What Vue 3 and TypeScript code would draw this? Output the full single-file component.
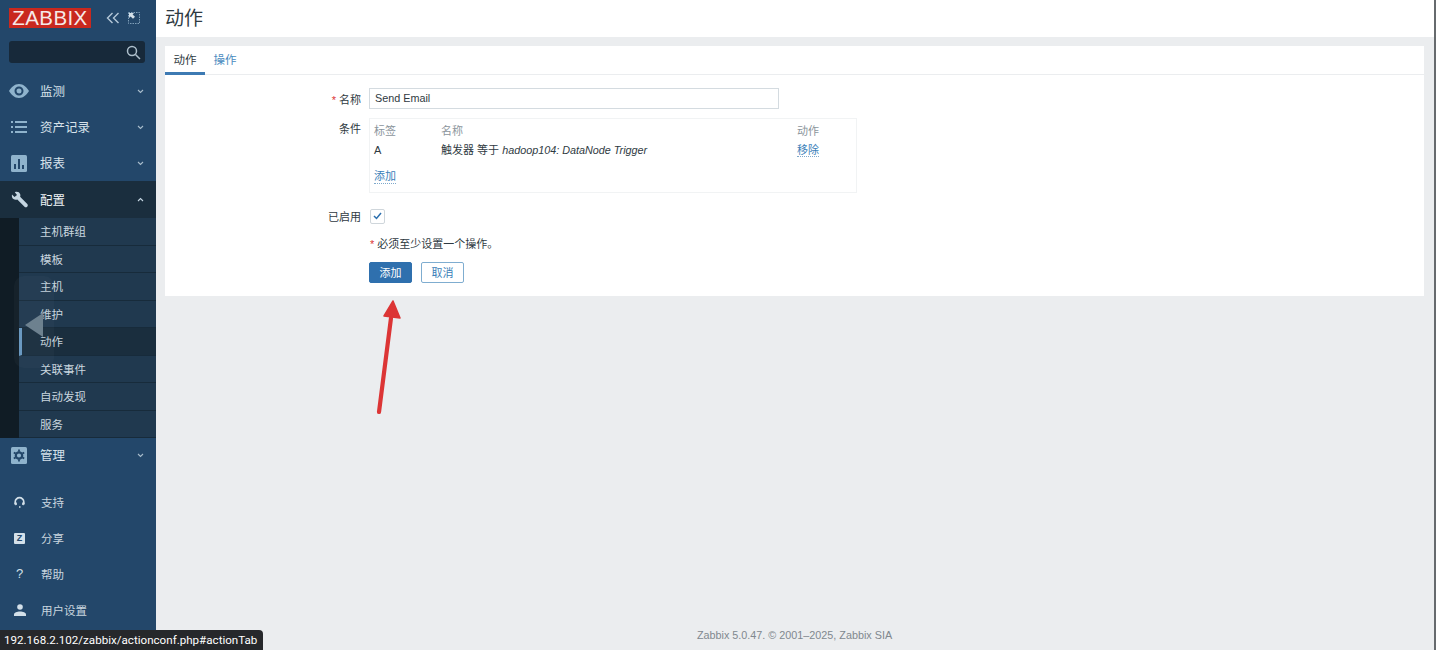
<script setup lang="ts">
const mainTop = [
  { label: '监测', icon: 'eye' },
  { label: '资产记录', icon: 'list' },
  { label: '报表', icon: 'chart' },
]
const subItems = ['主机群组', '模板', '主机', '维护', '动作', '关联事件', '自动发现', '服务']
const lower = [
  { label: '支持', icon: 'head' },
  { label: '分享', icon: 'z' },
  { label: '帮助', icon: 'q' },
  { label: '用户设置', icon: 'user' },
]
</script>

<template>
  <div class="page">
    <aside class="side">
      <div class="brand">
        <span class="logo">ZABBIX</span>
        <svg class="collapse" width="14" height="12" viewBox="0 0 14 12" fill="none" stroke="#b4c8d8" stroke-width="1.4"><path d="M6.5 1 1.5 6l5 5M12.5 1l-5 5 5 5" /></svg>
        <svg class="kiosk" width="12" height="12" viewBox="0 0 12 12" fill="none"><rect x=".5" y=".5" width="11" height="11" stroke="#7f9fb8" stroke-dasharray="1.500 1" /><path d="M1 1h5L4.600 2.400 7 4.800 5 6.800 2.600 4.400 1 6z" fill="#d3e0e9" /></svg>
      </div>
      <div class="search">
        <svg width="15" height="15" viewBox="0 0 15 15" fill="none" stroke="#aebfcc" stroke-width="1.500"><circle cx="6" cy="6" r="4.500" /><path d="m9.500 9.500 4.500 4.500" /></svg>
      </div>
      <nav class="menu">
        <div v-for="m in mainTop" :key="m.label" class="item">
          <span class="ico">
            <svg v-if="m.icon === 'eye'" width="20" height="14" viewBox="0 0 20 14"><path fill="#8fb3cc" fill-rule="evenodd" d="M10 0c4.500 0 8 3.500 10 7-2 3.500-5.500 7-10 7S2 10.500 0 7c2-3.500 5.500-7 10-7Zm0 2.500a4.500 4.500 0 1 0 0 9 4.500 4.500 0 0 0 0-9Zm0 2a2.500 2.500 0 1 1 0 5 2.500 2.500 0 0 1 0-5Z" /></svg>
            <svg v-else-if="m.icon === 'list'" class="pad2" width="16" height="12" viewBox="0 0 16 12" fill="#8fb3cc"><path d="M0 0h2v2H0zM4 0h12v2H4zM0 5h2v2H0zM4 5h12v2H4zM0 10h2v2H0zM4 10h12v2H4z" /></svg>
            <svg v-else class="pad2" width="16" height="17" viewBox="0 0 16 17"><rect width="16" height="17" rx="1.500" fill="#8fb3cc" /><path d="M3 9h2v5H3zM7 4h2v10H7zM11 10h2v4h-2z" fill="#23476a" /></svg>
          </span>
          <span class="lbl">{{ m.label }}</span>
          <svg class="chev" width="7" height="5" viewBox="0 0 7 5" fill="none" stroke="#a8bccb" stroke-width="1.100"><path d="m1 1 2.500 2.500L6 1" /></svg>
        </div>
        <div class="item open">
          <span class="ico">
            <svg class="pad2" width="17" height="17" viewBox="0 0 17 17"><path fill="#c5d6e2" d="M1 3.500 3.500 6 6 4 3.800 1.200C6 .2 8.500 1 9.200 3.200c.3 1 .2 2-.1 2.600l7.200 7.200c.7.800.7 2-.1 2.700-.8.800-2 .8-2.700 0L6.300 8.500C4 9.300 1.600 8.200 1 6 .8 5.200.8 4.300 1 3.500Z" /></svg>
          </span>
          <span class="lbl">配置</span>
          <svg class="chev" width="7" height="5" viewBox="0 0 7 5" fill="none" stroke="#c5d6e2" stroke-width="1.100"><path d="m1 4 2.500-2.500L6 4" /></svg>
        </div>
        <div class="sub">
          <div v-for="s in subItems" :key="s" class="sub-item" :class="{ active: s === '动作' }">{{ s }}</div>
        </div>
        <div class="item mgmt">
          <span class="ico">
            <svg class="pad2" width="16" height="17" viewBox="0 0 16 17"><rect width="16" height="17" rx="1.500" fill="#8fb3cc" /><circle cx="8" cy="8.500" r="3.200" fill="none" stroke="#23476a" stroke-width="2.200" /><path d="M8 2.500v2.200M8 12.300v2.200M2.800 5.500l1.900 1.100M11.300 10.400l1.900 1.100M2.800 11.500l1.900-1.100M11.300 6.600l1.900-1.100" stroke="#23476a" stroke-width="1.800" /></svg>
          </span>
          <span class="lbl">管理</span>
          <svg class="chev" width="7" height="5" viewBox="0 0 7 5" fill="none" stroke="#a8bccb" stroke-width="1.100"><path d="m1 1 2.500 2.500L6 1" /></svg>
        </div>
      </nav>
      <div class="lower">
        <div v-for="l in lower" :key="l.label" class="low-item">
          <span class="low-ico">
            <svg v-if="l.icon === 'head'" width="11" height="12" viewBox="0 0 11 12" fill="none" stroke="#d3e0e9" stroke-width="1.800"><path d="M2.400 8.800a4.200 4.200 0 1 1 6.200 0" /><path d="M1.500 6.500v2M9.500 6.500v2" stroke-width="2.400" /><path d="M5 11h1.500" stroke-width="1.600" /></svg>
            <span v-else-if="l.icon === 'z'" class="zbox">Z</span>
            <span v-else-if="l.icon === 'q'" class="qmark">?</span>
            <svg v-else width="12" height="12" viewBox="0 0 12 12" fill="#d3e0e9"><circle cx="6" cy="3" r="2.800" /><path d="M0 12v-1.500C0 8.500 3 7.500 6 7.500s6 1 6 3V12z" /></svg>
          </span>
          <span class="low-lbl">{{ l.label }}</span>
        </div>
      </div>
    </aside>

    <main class="main">
      <header class="head"><h1>动作</h1></header>
      <section class="card">
        <div class="tabs">
          <span class="tab on">动作</span>
          <span class="tab">操作</span>
        </div>
        <div class="form">
          <div class="row first">
            <label class="lab"><i>*</i> 名称</label>
            <div class="input">Send Email</div>
          </div>
          <div class="row cond">
            <label class="lab">条件</label>
            <div class="cond-box">
              <div class="cgrid hd"><span>标签</span><span>名称</span><span>动作</span></div>
              <div class="cgrid bd">
                <span>A</span>
                <span>触发器 等于 <em>hadoop104: DataNode Trigger</em></span>
                <span><a class="lnk">移除</a></span>
              </div>
              <a class="lnk add">添加</a>
            </div>
          </div>
          <div class="row en">
            <label class="lab">已启用</label>
            <span class="check"><svg width="9" height="8" viewBox="0 0 9 8" fill="none" stroke="#2b6fae" stroke-width="1.500"><path d="m1 4 2.500 2.500L8 1" /></svg></span>
          </div>
          <div class="row note"><span class="lab" /><span class="msg"><i>*</i> 必须至少设置一个操作。</span></div>
          <div class="row btns">
            <span class="lab" />
            <button class="btn pri">添加</button>
            <button class="btn alt">取消</button>
          </div>
        </div>
      </section>
      <footer class="foot">Zabbix 5.0.47. © 2001–2025, Zabbix SIA</footer>
    </main>

    <div class="edge" />
    <div class="swipe"><span class="tri" /></div>
    <svg class="arrow" width="40" height="130" viewBox="0 0 40 130">
      <path d="M9 120 21 26" stroke="#dc3535" stroke-width="4.200" stroke-linecap="round" fill="none" />
      <path d="M23 9 30 26 14 24Z" fill="#dc3535" stroke="#dc3535" stroke-width="1.500" stroke-linejoin="round" />
    </svg>
    <div class="status">192.168.2.102/zabbix/actionconf.php#actionTab</div>
  </div>
</template>

<style>
html, body { margin: 0; background: #ebedef; }
</style>

<style scoped>
.page {
  position: relative;
  display: flex;
  width: 1436px;
  height: 650px;
  overflow: hidden;
  font-family: "Liberation Sans", "Noto Sans CJK SC", sans-serif;
  font-size: 11px;
  color: #2f3a42;
  background: #ebedef;
}
.side {
  width: 156px;
  flex: none;
  display: flex;
  flex-direction: column;
  background: #23476a;
  color: #d3e0e9;
  font-family: "Noto Sans CJK SC", sans-serif;
}
.brand { display: flex; align-items: center; padding: 8px 0 0 9px; height: 20px; }
.logo {
  width: 82px;
  height: 20px;
  background: #c9281e;
  color: #f6e9e8;
  text-align: center;
  font: 20.500px/20px "Liberation Sans", sans-serif;
  letter-spacing: .4px;
}
.collapse { margin-left: 15px; }
.kiosk { margin-left: 8px; }
.search {
  margin: 13px 0 0 9px;
  width: 136px;
  height: 22px;
  border-radius: 3px;
  background: #17293a;
  display: flex;
  align-items: center;
  justify-content: flex-end;
  padding-right: 4px;
  box-sizing: border-box;
}
.menu { margin-top: 10px; }
.item { height: 36px; display: flex; align-items: center; padding-left: 9px; position: relative; font-size: 12.500px; color: #d7e2ea; }
.item.open { height: 37px; background: #1a2e3e; color: #eef3f6; }
.item.mgmt { height: 34px; }
.ico { width: 31px; display: flex; align-items: center; box-sizing: border-box; }
.pad2 { margin-left: 2px; }
.lbl { flex: 1; margin-top: -1px; }
.chev { margin-right: 12px; }
.sub { background: #101c25; padding-left: 19px; }
.sub-item {
  height: 27.500px;
  line-height: 26.500px;
  padding-left: 21px;
  box-sizing: border-box;
  background: #20394f;
  border-bottom: 1px solid #172b3b;
  font-size: 11.500px;
  color: #c9d6df;
}
.sub-item.active { background: #1a2e3e; border-left: 3px solid #6a9bc4; padding-left: 18px; }
.lower { margin-top: 12px; }
.low-item { height: 36px; display: flex; align-items: center; padding-left: 14px; font-size: 11.500px; color: #c9d6df; }
.low-ico { width: 27px; display: flex; align-items: center; }
.low-lbl { margin-top: -1px; }
.zbox { width: 11px; height: 11px; background: #d3e0e9; color: #23476a; font: bold 9px/11px "Liberation Sans", sans-serif; text-align: center; border-radius: 1px; }
.qmark { font: 13px/14px "Liberation Sans", sans-serif; padding-left: 2px; color: #d3e0e9; }

.main { flex: 1; display: flex; flex-direction: column; min-width: 0; }
.head { height: 37px; background: #fff; padding-left: 9px; flex: none; }
h1 { margin: 0; font: 400 19px/33px "Noto Sans CJK SC", sans-serif; color: #2f3a42; }
.card { margin: 9px 12px 0 9px; height: 250px; background: #fff; flex: none; }
.tabs { height: 28px; display: flex; border-bottom: 1px solid #ebedef; }
.tab { width: 40px; text-align: center; line-height: 27px; height: 26px; color: #4a8bc0; font-size: 11.500px; font-family: "Noto Sans CJK SC", sans-serif; }
.tab.on { color: #2f3a42; border-bottom: 3px solid #3d7ab3; }
.form { font-size: 11px; }
.row { display: flex; align-items: center; }
.lab { width: 204px; padding-right: 8px; box-sizing: border-box; text-align: right; flex: none; }
.lab i, .msg i { color: #dc3535; font-style: normal; }
.first { margin-top: 13px; height: 21px; }
.input {
  width: 410px; height: 21px; box-sizing: border-box;
  border: 1px solid #d4dbe0; background: #fff; padding-left: 5px; line-height: 19px;
  font-family: "Liberation Sans", sans-serif; font-size: 10.800px; color: #2f3a42;
}
.cond { margin-top: 9px; align-items: flex-start; }
.cond .lab { line-height: 23px; }
.cond-box { width: 488px; height: 75px; box-sizing: border-box; border: 1px solid #f1f3f4; padding: 0 4px; position: relative; }
.cgrid { display: grid; grid-template-columns: 67px 356px 1fr; }
.hd { color: #8b959c; height: 23px; line-height: 24px; }
.bd { height: 20px; line-height: 16px; }
.bd em { font-family: "Liberation Sans", sans-serif; font-style: italic; font-size: 10.800px; }
.lnk { color: #3a80b8; border-bottom: 1px dotted #7fa9cb; }
.add { display: inline-block; margin-top: 7px; line-height: 14px; }
.en { margin-top: 13px; height: 20px; }
.check { width: 13px; height: 13px; border: 1px solid #cfd6db; border-radius: 2px; display: flex; align-items: center; justify-content: center; margin-left: 1px; }
.note { margin-top: 8px; height: 18px; }
.msg { margin-left: 1px; }
.btns { margin-top: 10px; }
.btn { height: 21px; padding: 0 0 2px; border-radius: 2px; font-family: "Noto Sans CJK SC", sans-serif; font-size: 11px; box-sizing: border-box; }
.pri { width: 43px; background: #2f70ae; border: 1px solid #2f70ae; color: #fff; }
.alt { width: 43px; margin-left: 9px; background: #fff; border: 1px solid #7fadd0; color: #3a80b8; }
.foot { margin-top: auto; height: 29px; line-height: 29px; padding-right: 3px; text-align: center; font-size: 10.800px; color: #80888e; font-family: "Liberation Sans", sans-serif; }

.edge { position: absolute; right: 0; top: 0; bottom: 0; width: 2.500px; background: #666a6d; }
.swipe { position: absolute; left: 14px; top: 276px; width: 40px; height: 92px; border-radius: 10px; background: rgba(120, 135, 145, .06); }
.tri { position: absolute; left: 11px; top: 37px; width: 0; height: 0; border-style: solid; border-width: 12px 18px 12px 0; border-color: transparent #6d818f transparent transparent; }
.arrow { position: absolute; left: 370px; top: 292px; }
.status {
  position: absolute; left: 0; bottom: 0; width: 263px; height: 20px; box-sizing: border-box;
  background: #26282b; color: #fff; border-top-right-radius: 4px;
  font: 11.600px/20px Roboto, sans-serif; padding-left: 4px; white-space: nowrap;
}
</style>
